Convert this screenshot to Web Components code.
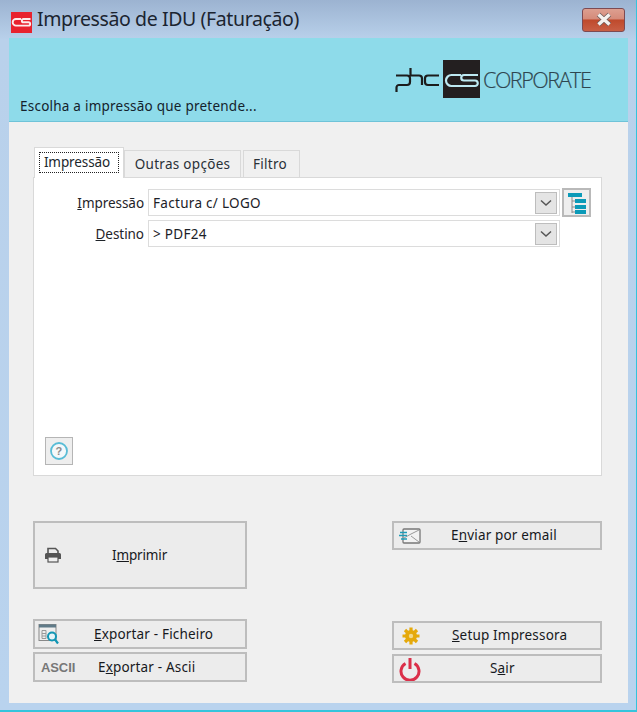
<!DOCTYPE html>
<html lang="pt">
<head>
<meta charset="utf-8">
<title>Impressão de IDU</title>
<style>
  html, body { margin: 0; height: 100%; }
  body { font-family: "Noto Sans", "Open Sans", sans-serif; color: #1a1a1a; }
</style>
</head>
<body>
<idu-window>
  <title-bar slot="title">Impressão de IDU (Faturação)</title-bar>
  <top-banner slot="banner">Escolha a impressão que pretende...</top-banner>
  <tab-panel>
    <form-row><u>I</u>mpressão<combo-box slot="field" tree>Factura c/ LOGO</combo-box></form-row>
    <form-row><u>D</u>estino<combo-box slot="field">&gt;&nbsp;PDF24</combo-box></form-row>
  </tab-panel>
  <action-area>
    <app-button slot="print" icon="printer" size="big" pad="77" icon-left="9" style="letter-spacing:-.15px">I<u>m</u>primir</app-button>
    <app-button slot="mail" icon="mail" pad="57" icon-left="5">E<u>n</u>viar por email</app-button>
    <app-button slot="file" icon="file" pad="59" icon-left="3"><u>E</u>xportar - Ficheiro</app-button>
    <app-button slot="ascii" icon="ascii" pad="63" icon-left="6">E<u>x</u>portar - Ascii</app-button>
    <app-button slot="setup" icon="gear" pad="58" icon-left="8"><u>S</u>etup Impressora</app-button>
    <app-button slot="exit" icon="power" pad="96" icon-left="5">S<u>a</u>ir</app-button>
  </action-area>
</idu-window>

<script>
class IduWindow extends HTMLElement {
  constructor() {
    super();
    this.attachShadow({ mode: 'open' });
    this.shadowRoot.innerHTML = `
      <style>
        :host {
          display: block;
          box-sizing: border-box;
          width: 637px;
          height: 712px;
          padding: 0 8px 7px 9px;
          background: linear-gradient(#9cb3d1 0, #b9d1eb 40px, #b9d3ee 100%);
          border-bottom: 2px solid #35c4dc;
          border-right: 1px solid #35c4dc;
        }
        .client {
          height: 665px;
          background: #f0f0f0;
          display: flex;
          flex-direction: column;
        }
      </style>
      <slot name="title"></slot>
      <div class="client">
        <slot name="banner"></slot>
        <slot></slot>
      </div>
    `;
  }
}

class TitleBar extends HTMLElement {
  constructor() {
    super();
    this.attachShadow({ mode: 'open' });
    this.shadowRoot.innerHTML = `
      <style>
        :host {
          display: flex;
          align-items: center;
          height: 38px;
          box-sizing: border-box;
          padding: 0 0 0 2px;
          font-size: 19.5px;
          letter-spacing: -.39px;
          color: #1b2430;
        }
        svg.cs { width: 21px; height: 21px; margin: 6px 5px 0 0; flex: none; }
        .text { flex: 1; white-space: nowrap; padding-bottom: 1px; }
        .close {
          width: 43px;
          height: 24px;
          box-sizing: border-box;
          margin-right: 3px;
          margin-top: 1px;
          border: 1px solid #7d4a52;
          border-radius: 3px;
          background: linear-gradient(#dd9f90 0, #d58b7a 45%, #bf4a2c 50%, #c85f45 100%);
          display: flex;
          align-items: center;
          justify-content: center;
        }
      </style>
      <svg class="cs" viewBox="0 0 21 21">
        <rect width="21" height="21" fill="#e8222e"/>
        <path d="M10 7H5a3.300 3.300 0 0 0 0 6.600H10M19.500 7H12.500a1.650 1.650 0 0 0 0 3.300h5a1.650 1.650 0 0 1 0 3.300H10" fill="none" stroke="#fdecec" stroke-width="1.900"/>
      </svg>
      <span class="text"><slot></slot></span>
      <div class="close">
        <svg width="18" height="15" viewBox="0 0 18 15">
          <path d="M3.500 2.500 14.500 12.500M14.500 2.500 3.500 12.500" stroke="#6d5a58" stroke-width="5"/>
          <path d="M3.500 2.500 14.500 12.500M14.500 2.500 3.500 12.500" stroke="#f4f1ee" stroke-width="3.400"/>
        </svg>
      </div>
    `;
  }
}

class TopBanner extends HTMLElement {
  constructor() {
    super();
    this.attachShadow({ mode: 'open' });
    this.shadowRoot.innerHTML = `
      <style>
        :host {
          display: flex;
          justify-content: space-between;
          box-sizing: border-box;
          height: 84px;
          background: #8edbea;
          border-bottom: 1px solid #6fc3d8;
          font-size: 13.5px;
          letter-spacing: .23px;
          color: #14222c;
        }
        .hint { align-self: flex-end; padding: 0 0 6px 11px; white-space: nowrap; }
        .logo { display: flex; align-items: center; margin: 22px 0 0 0; height: 38px; width: 233px; }
        .logo svg { display: block; flex: none; }
        .word {
          font-size: 21.5px;
          letter-spacing: -1.45px;
          color: #2e4650;
          margin-left: 3px;
          font-family: "Open Sans", sans-serif;
          font-weight: 300;
          -webkit-text-stroke: .2px #2e4650;
        }
      </style>
      <span class="hint"><slot></slot></span>
      <div class="logo">
        <svg width="46" height="25" viewBox="0 0 46 25" style="margin:3px 2px 0 0">
          <path d="M1 7.500H12a3 3 0 0 1 3 3V14a3 3 0 0 1-3 3H4a2.500 2.500 0 0 0-2.500 2.500V24M15.500 0V7.500H24a3 3 0 0 1 3 3V17M44 7.500H33a3 3 0 0 0-3 3V14a3 3 0 0 0 3 3H44" fill="none" stroke="#1c1c1c" stroke-width="2.200"/>
        </svg>
        <svg width="37" height="38" viewBox="0 0 37 38">
          <rect width="37" height="38" fill="#231f20"/>
          <path d="M18 15H8.500a5.500 5.500 0 0 0 0 11H18M35 15H21a2.750 2.750 0 0 0 0 5.500h11a2.750 2.750 0 0 1 0 5.500H17" fill="none" stroke="#bde9f2" stroke-width="2.200"/>
        </svg>
        <span class="word">CORPORATE</span>
      </div>
    `;
  }
}

class TabPanel extends HTMLElement {
  constructor() {
    super();
    this.attachShadow({ mode: 'open' });
    this.shadowRoot.innerHTML = `
      <style>
        :host {
          display: block;
          margin: 25px 26px 0 24px;
          font-size: 13.5px;
          letter-spacing: .3px;
          color: #2a3138;
        }
        .tabs { display: flex; align-items: flex-end; height: 30px; padding-left: 1px; position: relative; z-index: 1; }
        .tab {
          box-sizing: border-box;
          height: 27px;
          padding-top: 4px;
          border: 1px solid #d9d9d9;
          border-bottom: 0;
          background: #f0f0f0;
          text-align: center;
          white-space: nowrap;
        }
        .tab.on {
          width: 90px;
          background: #fff;
          padding: 4px;
          margin-bottom: -1px;
          height: 31px;
          color: #20262c;
          letter-spacing: -.1px;
        }
        .tab.on span { display: block; border: 1px dotted #222; height: 18px; line-height: 18px; padding: 0 4px 1px 0; }
        .body {
          box-sizing: border-box;
          height: 299px;
          background: #fff;
          border: 1px solid #d9d9d9;
          padding: 11px 10px 0 0;
          display: flex;
          flex-direction: column;
          gap: 4px;
          position: relative;
        }
        .help {
          position: absolute;
          left: 11px;
          bottom: 10px;
          width: 28px;
          height: 28px;
          box-sizing: border-box;
          border: 1px solid #b5b5b5;
          background: #eee;
          display: flex;
          align-items: center;
          justify-content: center;
        }
      </style>
      <div class="tabs">
        <div class="tab on"><span>Impressão</span></div>
        <div class="tab" style="width:117px">Outras opções</div>
        <div class="tab" style="width:57px;margin-left:2px;padding-right:3px">Filtro</div>
      </div>
      <div class="body">
        <slot></slot>
        <div class="help">
          <svg width="20" height="20" viewBox="0 0 20 20">
            <circle cx="10" cy="10" r="8" fill="#f4f8fa" stroke="#58bcd6" stroke-width="1.800"/>
            <text x="10" y="14" text-anchor="middle" font-size="11" font-weight="700" fill="#8a8a8a" font-family="Liberation Sans, sans-serif">?</text>
          </svg>
        </div>
      </div>
    `;
  }
}

class FormRow extends HTMLElement {
  constructor() {
    super();
    this.attachShadow({ mode: 'open' });
    this.shadowRoot.innerHTML = `
      <style>
        :host { display: flex; align-items: center; height: 27px; color: #1f2429; letter-spacing: -.05px; }
        .label { width: 110px; flex: none; text-align: right; margin-right: 4px; white-space: nowrap; }
      </style>
      <span class="label"><slot></slot></span>
      <slot name="field"></slot>
    `;
  }
}

class ComboBox extends HTMLElement {
  constructor() {
    super();
    this.attachShadow({ mode: 'open' });
    const tree = this.hasAttribute('tree') ? `
      <div class="tree">
        <svg width="24" height="24" viewBox="0 0 24 24">
          <path d="M7 4V22M7 10H10M7 16H10M7 21H10" stroke="#8b8b8b" stroke-width="1" fill="none"/>
          <rect x="3" y="2" width="14" height="4" fill="#0b9ab8"/>
          <rect x="10" y="8" width="11" height="4" fill="#0b9ab8"/>
          <rect x="10" y="14" width="11" height="4" fill="#0b9ab8"/>
          <rect x="10" y="19" width="11" height="4" fill="#0b9ab8"/>
        </svg>
      </div>` : '';
    this.shadowRoot.innerHTML = `
      <style>
        :host { display: block; position: relative; width: 412px; height: 27px; letter-spacing: .3px; }
        .box {
          box-sizing: border-box;
          height: 100%;
          border: 1px solid #dcdcdc;
          background: #fff;
          display: flex;
          align-items: center;
          justify-content: space-between;
          padding: 0 2px 0 4px;
          color: #1c2127;
        }
        .arrow {
          width: 22px;
          height: 22px;
          box-sizing: border-box;
          border: 1px solid #bdbdbd;
          background: #e4e4e4;
          display: flex;
          align-items: center;
          justify-content: center;
        }
        .tree {
          position: absolute;
          left: 414px;
          top: -1px;
          width: 29px;
          height: 29px;
          box-sizing: border-box;
          border: 2px solid #b9b9b9;
          background: #eee;
          display: flex;
          align-items: center;
          justify-content: center;
        }
      </style>
      <div class="box">
        <span><slot></slot></span>
        <div class="arrow">
          <svg width="12" height="8" viewBox="0 0 12 8"><path d="M1 1.500 6 6 11 1.500" fill="none" stroke="#555" stroke-width="1.500"/></svg>
        </div>
      </div>
      ${tree}
    `;
  }
}

class ActionArea extends HTMLElement {
  constructor() {
    super();
    this.attachShadow({ mode: 'open' });
    this.shadowRoot.innerHTML = `
      <style>
        :host {
          display: flex;
          justify-content: space-between;
          margin: 45px 26px 0 24px;
          font-size: 13.5px;
          letter-spacing: .17px;
          color: #17191d;
        }
        .col { display: flex; flex-direction: column; }
        .left { width: 214px; }
        .right { width: 210px; }
        .left ::slotted([slot="file"]) { margin-top: 30px; height: 30px; }
        .left ::slotted([slot="ascii"]) { margin-top: 3px; height: 30px; }
        .right ::slotted([slot="setup"]) { margin-top: 71px; }
        .right ::slotted([slot="exit"]) { margin-top: 4px; }
      </style>
      <div class="col left">
        <slot name="print"></slot>
        <slot name="file"></slot>
        <slot name="ascii"></slot>
      </div>
      <div class="col right">
        <slot name="mail"></slot>
        <slot name="setup"></slot>
        <slot name="exit"></slot>
      </div>
    `;
  }
}

const BUTTON_ICONS = {
  printer: `<svg width="18" height="16" viewBox="0 0 18 16">
      <path d="M4 6V1.500H11.500L14 4V6" fill="none" stroke="#555" stroke-width="1.600"/>
      <path d="M2.500 6H15.500a1.500 1.500 0 0 1 1.500 1.500V12H1V7.500A1.500 1.500 0 0 1 2.500 6Z" fill="#555"/>
      <rect x="4" y="10" width="10" height="5" fill="#f0f0f0" stroke="#555" stroke-width="1.200"/>
    </svg>`,
  mail: `<svg width="22" height="16" viewBox="0 0 22 16">
      <rect x="4" y="1" width="17" height="14" rx="1" fill="#f2f2f2" stroke="#777" stroke-width="1.300"/>
      <path d="M5 10 12 6 20 2M12 8 20 14" fill="none" stroke="#999" stroke-width="1"/>
      <path d="M1 4.500H8M0 7.500H8M2 11H8" stroke="#1f9cb8" stroke-width="1.300"/>
    </svg>`,
  file: `<svg width="21" height="21" viewBox="0 0 21 21">
      <rect x="1" y="1" width="17" height="16" fill="#eee" stroke="#888" stroke-width="1"/>
      <rect x="1" y="1" width="17" height="3" fill="#5f7a88"/>
      <path d="M4 7H8V15H4ZM4 10H8M4 12.500H8" fill="none" stroke="#999" stroke-width="1"/>
      <circle cx="14" cy="13" r="4" fill="#e6f4f8" stroke="#1296b4" stroke-width="2"/>
      <path d="M17 16 20 20" stroke="#1296b4" stroke-width="2.200"/>
    </svg>`,
  gear: `<svg width="18" height="18" viewBox="0 0 18 18">
      <circle cx="9" cy="9" r="6" fill="#e5a90b"/>
      <path d="M9 .5V17.500M.5 9H17.500M3 3 15 15M15 3 3 15" stroke="#e5a90b" stroke-width="3.200"/>
      <circle cx="9" cy="9" r="2.200" fill="#f3d98a"/>
    </svg>`,
  power: `<svg width="22" height="24" viewBox="0 0 22 24">
      <path d="M6.500 6.500a9 9 0 1 0 9 0" fill="none" stroke="#db2f49" stroke-width="3"/>
      <path d="M11 1V12" stroke="#db2f49" stroke-width="3"/>
    </svg>`,
  ascii: `<span style="font:700 13px 'Liberation Sans',sans-serif;color:#777;letter-spacing:-.1px">ASCII</span>`
};

class AppButton extends HTMLElement {
  constructor() {
    super();
    this.attachShadow({ mode: 'open' });
  }
  connectedCallback() {
    const big = this.getAttribute('size') === 'big';
    this.shadowRoot.innerHTML = `
      <style>
        :host {
          display: flex;
          position: relative;
          box-sizing: border-box;
          height: ${big ? 68 : 29}px;
          border: 2px solid #bdbdbd;
          background: #ececec;
          align-items: center;
          white-space: nowrap;
        }
        .icon { position: absolute; left: ${this.getAttribute('icon-left')}px; top: 50%; transform: translateY(-50%); display: flex; }
        .label { margin-left: ${this.getAttribute('pad')}px; padding-bottom: 1px; }
      </style>
      <span class="icon">${BUTTON_ICONS[this.getAttribute('icon')]}</span>
      <span class="label"><slot></slot></span>
    `;
  }
}

customElements.define('idu-window', IduWindow);
customElements.define('title-bar', TitleBar);
customElements.define('top-banner', TopBanner);
customElements.define('tab-panel', TabPanel);
customElements.define('form-row', FormRow);
customElements.define('combo-box', ComboBox);
customElements.define('action-area', ActionArea);
customElements.define('app-button', AppButton);
</script>
</body>
</html>
